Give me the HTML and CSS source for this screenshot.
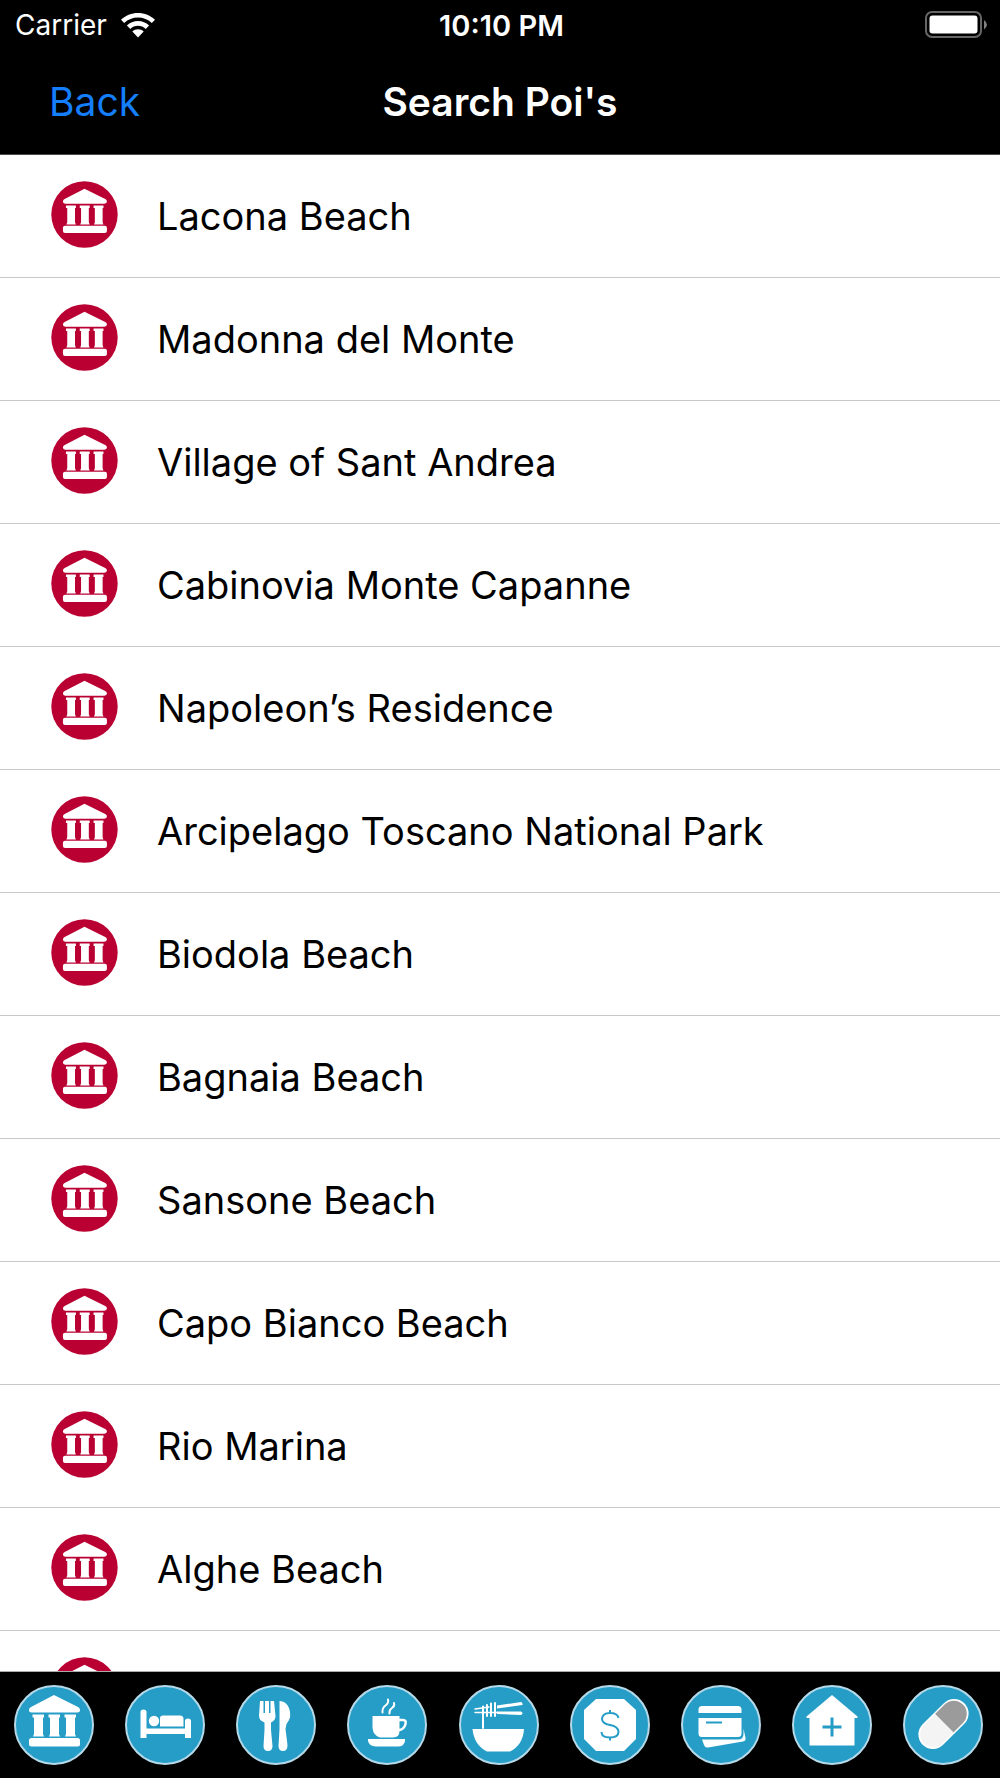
FILE: index.html
```html
<!DOCTYPE html>
<html lang="en">

<head>
    <meta charset="UTF-8">
    <meta name="viewport" content="width=device-width, initial-scale=1.0">
    <title>Search Poi's</title>
    <link rel="stylesheet" href="styles.css">
</head>

<body>
    <!-- shared museum icon, used by the list and the toolbar -->
    <svg class="sprite" aria-hidden="true">
        <symbol id="museum" viewBox="0 0 80 80">
            <path d="M40 10 64 22Q66 23 66 25 66 27.500 63 27.500H17.500Q15 27.500 15 25 15 23 17 22Z" />
            <path d="M18.500 29.500H30V32.500H29V49L30 51.500H19L20 49V32.500H18.500ZM34.500 29.500H46V32.500H45V49L46 51.500H35L36 49V32.500H34.500ZM50.500 29.500H62V32.500H61V49L62 51.500H51L52 49V32.500H50.500Z" />
            <rect x="15" y="53" width="51" height="8.500" rx="2.500" />
        </symbol>
    </svg>

    <header class="header">
        <div class="status">
            <div class="carrier">
                <span>Carrier</span>
                <svg class="wifi" viewBox="0 0 34 25" aria-hidden="true">
                    <path d="M17 0C10.500 0 4.500 2.500 0 6.800L3.200 10C7 6.400 11.800 4.500 17 4.500S27 6.400 30.800 10L34 6.800C29.500 2.500 23.500 0 17 0Z" />
                    <path d="M17 8C12.800 8 8.900 9.600 5.900 12.500L9.300 15.900C11.400 13.900 14.100 12.800 17 12.800S22.600 13.900 24.700 15.900L28.100 12.500C25.100 9.600 21.200 8 17 8Z" />
                    <path d="M17 16.300C14.800 16.300 12.900 17 11.300 18.400L17 24.600 22.700 18.400C21.100 17 19.200 16.300 17 16.300Z" />
                </svg>
            </div>
            <time class="time">10:10 PM</time>
            <svg class="battery" viewBox="0 0 63 28" aria-hidden="true">
                <rect class="battery-case" x="1" y="1" width="55" height="25" rx="6" />
                <rect x="4.500" y="4.500" width="48" height="18" rx="3" />
                <path class="battery-tip" d="M59 9Q65 13.500 59 18.500Z" />
            </svg>
        </div>
        <nav class="navbar">
            <button type="button" class="btn-back">Back</button>
            <h1 class="title">Search Poi's</h1>
        </nav>
    </header>

    <main class="list-wrap">
        <ul class="list">
            <li><a class="poi" href="#"><svg class="poi-icon" viewBox="0 0 80 80"><circle cx="40" cy="40" r="38.500" /><use href="#museum" /></svg>Lacona Beach</a></li>
            <li><a class="poi" href="#"><svg class="poi-icon" viewBox="0 0 80 80"><circle cx="40" cy="40" r="38.500" /><use href="#museum" /></svg>Madonna del Monte</a></li>
            <li><a class="poi" href="#"><svg class="poi-icon" viewBox="0 0 80 80"><circle cx="40" cy="40" r="38.500" /><use href="#museum" /></svg>Village of Sant Andrea</a></li>
            <li><a class="poi" href="#"><svg class="poi-icon" viewBox="0 0 80 80"><circle cx="40" cy="40" r="38.500" /><use href="#museum" /></svg>Cabinovia Monte Capanne</a></li>
            <li><a class="poi" href="#"><svg class="poi-icon" viewBox="0 0 80 80"><circle cx="40" cy="40" r="38.500" /><use href="#museum" /></svg>Napoleon’s Residence</a></li>
            <li><a class="poi" href="#"><svg class="poi-icon" viewBox="0 0 80 80"><circle cx="40" cy="40" r="38.500" /><use href="#museum" /></svg>Arcipelago Toscano National Park</a></li>
            <li><a class="poi" href="#"><svg class="poi-icon" viewBox="0 0 80 80"><circle cx="40" cy="40" r="38.500" /><use href="#museum" /></svg>Biodola Beach</a></li>
            <li><a class="poi" href="#"><svg class="poi-icon" viewBox="0 0 80 80"><circle cx="40" cy="40" r="38.500" /><use href="#museum" /></svg>Bagnaia Beach</a></li>
            <li><a class="poi" href="#"><svg class="poi-icon" viewBox="0 0 80 80"><circle cx="40" cy="40" r="38.500" /><use href="#museum" /></svg>Sansone Beach</a></li>
            <li><a class="poi" href="#"><svg class="poi-icon" viewBox="0 0 80 80"><circle cx="40" cy="40" r="38.500" /><use href="#museum" /></svg>Capo Bianco Beach</a></li>
            <li><a class="poi" href="#"><svg class="poi-icon" viewBox="0 0 80 80"><circle cx="40" cy="40" r="38.500" /><use href="#museum" /></svg>Rio Marina</a></li>
            <li><a class="poi" href="#"><svg class="poi-icon" viewBox="0 0 80 80"><circle cx="40" cy="40" r="38.500" /><use href="#museum" /></svg>Alghe Beach</a></li>
            <li><a class="poi" href="#"><svg class="poi-icon" viewBox="0 0 80 80"><circle cx="40" cy="40" r="38.500" /><use href="#museum" /></svg></a></li>
        </ul>
    </main>

    <footer class="toolbar">
        <button type="button" class="btn-cat" aria-label="Museums">
            <svg viewBox="0 0 80 80"><circle class="disc" cx="40" cy="40" r="39" /><use href="#museum" /></svg>
        </button>
        <button type="button" class="btn-cat" aria-label="Hotels">
            <svg viewBox="0 0 80 80">
                <circle class="disc" cx="40" cy="40" r="39" />
                <path d="M15.500 53V27Q15.500 24.500 18.500 24.500T21.500 27V43.500H60V36Q60 33.500 63 33.500T66 36V53H60V49H21.500V53Z" />
                <circle cx="29" cy="36" r="5.200" />
                <path d="M35 41.500V33Q35 30.500 38 30.500H55Q58.500 30.500 58.500 34V41.500Z" />
            </svg>
        </button>
        <button type="button" class="btn-cat" aria-label="Restaurants">
            <svg viewBox="0 0 80 80">
                <circle class="disc" cx="40" cy="40" r="39" />
                <path d="M24 16H27.500V28H29V16H33V28H34.500V16H38L39.500 31Q39.500 35.500 35 37.500V45L36.500 61Q36.500 66 32 66T27.500 61L28.500 45V37.500Q23 35.500 23 31Z" />
                <path d="M43.500 16Q50 16 53 23 56.500 32 50.500 39L49.500 44 51.500 60Q51.500 66 47 66T42.500 61L43.500 44Z" />
            </svg>
        </button>
        <button type="button" class="btn-cat" aria-label="Bars">
            <svg viewBox="0 0 80 80">
                <circle class="disc" cx="40" cy="40" r="39" />
                <path d="M25.500 31H52.500V46Q52.500 52.500 46 52.500H33Q26.500 51 25.500 43Z" />
                <path class="line" stroke-width="2.500" d="M52 35H56Q59.500 35 58.500 39 57 45 51.500 45" />
                <path d="M21 54H58V56Q57 61.500 51 61.500H29Q22 61 21 56Z" />
                <path class="line" stroke-width="2" d="M41 14.500Q42 18 38.500 20.500T35.500 27.500M47 18Q48 21 45 23T42.500 28.500" />
            </svg>
        </button>
        <button type="button" class="btn-cat" aria-label="Street food">
            <svg viewBox="0 0 80 80">
                <circle class="disc" cx="40" cy="40" r="39" />
                <path d="M13.500 44H65Q64 60 51 66.500H28Q15 60 13.500 44Z" />
                <path class="line" stroke-width="2" d="M24 43V21.500M28 31V20M32 31V18.500M36 31V18" />
                <path class="line" stroke-width="1.500" d="M16 24 30 22M16 27.500H38" />
                <path d="M38 20.500 62 17Q64 17.500 63.500 20L38 23.500ZM38 26.500H62Q65 28 62 30L38 29Z" />
            </svg>
        </button>
        <button type="button" class="btn-cat" aria-label="Banks">
            <svg viewBox="0 0 80 80">
                <circle class="disc" cx="40" cy="40" r="39" />
                <path d="M26 14H54L66 25V54L54 66H26L14 54V25Z" />
                <path class="mark" stroke-width="2" d="M48.500 33Q47.500 28 40 28T32 34Q32 38.500 40 40T48.500 46.500Q48.500 52.500 40 52.500T31.500 47M40 25V28M40 52.500V55.500" />
            </svg>
        </button>
        <button type="button" class="btn-cat" aria-label="Payments">
            <svg viewBox="0 0 80 80">
                <circle class="disc" cx="40" cy="40" r="39" />
                <path d="M17.500 28V24.500Q17.500 21 21 21H57Q60.500 21 60.500 24.500V28ZM17.500 33H60.500V48.500Q60.500 52 57 52H21Q17.500 52 17.500 48.500Z" />
                <path d="M21 54.500H57Q62.500 54.500 62.500 49V43.500L64.500 53Q65 56 62 56.500L27 62.500Q24 63 23 60Z" />
                <path class="mark" stroke-width="2" d="M25 37.500H41" />
            </svg>
        </button>
        <button type="button" class="btn-cat" aria-label="Hospitals">
            <svg viewBox="0 0 80 80">
                <circle class="disc" cx="40" cy="40" r="39" />
                <path d="M40 10 65.500 31.500V33H62.500V60.500H17.500V33H14.500V31.500Z" />
                <path class="mark" stroke-width="3" d="M40 32.500V51.500M30.500 42H49.500" />
            </svg>
        </button>
        <button type="button" class="btn-cat" aria-label="Pharmacies">
            <svg viewBox="0 0 80 80">
                <circle class="disc" cx="40" cy="40" r="39" />
                <g transform="rotate(45 40.500 39)">
                    <rect x="26" y="9.500" width="29" height="59" rx="14.500" />
                    <path class="pill-top" d="M27.500 38V24.500A13 13 0 0 1 53.500 24.500V38Z" />
                    <path class="pill-bottom" d="M27.500 38V53.500A13 13 0 0 0 53.500 53.500V38Z" />
                </g>
            </svg>
        </button>
    </footer>
</body>

</html>
```
FILE: styles.css
```css
* {
    box-sizing: border-box;
}

body {
    display: flex;
    flex-direction: column;
    height: 100vh;
    margin: 0;
    background-color: #fff;
    color: #000;
    font-family: Inter, "Liberation Sans", sans-serif;
}

.sprite {
    display: none;
}

/* header */
.header {
    flex: none;
    background-color: #000;
    color: #fff;
    border-bottom: 1px solid #4a4a4a;
}

.status {
    display: grid;
    grid-template-columns: 1fr auto 1fr;
    align-items: center;
    height: 50px;
    padding: 0 12px 0 15px;
    font-size: 28px;
}

.carrier {
    display: flex;
    align-items: center;
    gap: 14px;
}

.wifi {
    width: 34px;
    height: 25px;
    fill: #fff;
}

.time {
    font-size: 29px;
    font-weight: 600;
}

.battery {
    justify-self: end;
    width: 63px;
    height: 28px;
    fill: #fff;
}

.battery .battery-case {
    fill: none;
    stroke: #666;
    stroke-width: 2;
}

.battery .battery-tip {
    fill: #808080;
}

.navbar {
    display: grid;
    grid-template-columns: 1fr auto 1fr;
    align-items: center;
    height: 104px;
    padding: 0 49px 2px;
}

.btn-back {
    justify-self: start;
    padding: 0;
    border: none;
    background: none;
    color: #147efb;
    font-family: inherit;
    font-size: 39px;
    cursor: pointer;
}

.title {
    margin: 0;
    font-size: 39px;
    font-weight: 600;
}

/* list */
.list-wrap {
    flex: 1;
    min-height: 0;
    overflow-y: auto;
    scrollbar-width: none;
}

.list {
    margin: 0;
    padding: 0;
    list-style: none;
}

.poi {
    display: flex;
    align-items: center;
    gap: 38px;
    height: 123px;
    padding: 0 50px;
    border-bottom: 1px solid #c8c8c8;
    color: inherit;
    font-size: 38px;
    text-decoration: none;
}

.poi-icon {
    flex: none;
    width: 69px;
    height: 69px;
    margin-bottom: 3px;
    fill: #fff;
}

.poi-icon circle {
    fill: #ba0032;
}

/* toolbar */
.toolbar {
    flex: none;
    display: flex;
    align-items: center;
    justify-content: space-between;
    height: 107px;
    padding: 0 17px 0 14px;
    border-top: 1px solid #aaa;
    background-color: #000;
}

.btn-cat {
    width: 80px;
    height: 80px;
    padding: 0;
    border: none;
    background: none;
    cursor: pointer;
}

.btn-cat svg {
    display: block;
    width: 100%;
    height: 100%;
    fill: #fff;
}

.btn-cat .disc {
    fill: #259dc6;
    stroke: #b5d9e8;
    stroke-width: 2;
}

.btn-cat .line {
    fill: none;
    stroke: #fff;
    stroke-linecap: round;
}

.btn-cat .mark {
    fill: none;
    stroke: #259dc6;
}

.btn-cat .pill-top {
    fill: #9b9b9b;
}

.btn-cat .pill-bottom {
    fill: #f4f4f4;
}
```
